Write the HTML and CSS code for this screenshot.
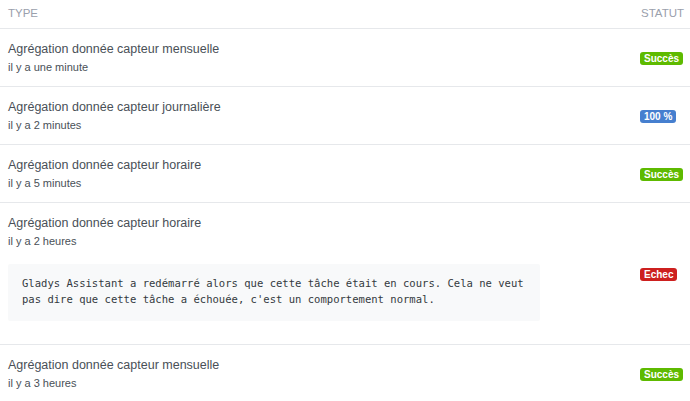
FILE: index.html
```html
<!DOCTYPE html>
<html lang="fr">
<head>
<meta charset="utf-8">
<link rel="stylesheet" href="styles.css">
</head>
<body>
<table class="jobs">
  <thead>
    <tr><th class="col-type">Type</th><th class="col-status">Statut</th></tr>
  </thead>
  <tbody>
    <tr>
      <td class="col-type"><div class="title">Agrégation donnée capteur mensuelle</div><div class="sub">il y a une minute</div></td>
      <td class="col-status"><span class="badge success">Succès</span></td>
    </tr>
    <tr>
      <td class="col-type"><div class="title">Agrégation donnée capteur journalière</div><div class="sub">il y a 2 minutes</div></td>
      <td class="col-status"><span class="badge progress">100 %</span></td>
    </tr>
    <tr>
      <td class="col-type"><div class="title">Agrégation donnée capteur horaire</div><div class="sub">il y a 5 minutes</div></td>
      <td class="col-status"><span class="badge success">Succès</span></td>
    </tr>
    <tr>
      <td class="col-type"><div class="title">Agrégation donnée capteur horaire</div><div class="sub">il y a 2 heures</div><pre class="error">Gladys Assistant a redémarré alors que cette tâche était en cours. Cela ne veut pas dire que cette tâche a échouée, c'est un comportement normal.</pre></td>
      <td class="col-status"><span class="badge failed">Echec</span></td>
    </tr>
    <tr>
      <td class="col-type"><div class="title">Agrégation donnée capteur mensuelle</div><div class="sub">il y a 3 heures</div></td>
      <td class="col-status"><span class="badge success">Succès</span></td>
    </tr>
  </tbody>
</table>
</body>
</html>
```
FILE: styles.css
```css
html, body {
  margin: 0;
  padding: 0;
  background: #ffffff;
}
body {
  font-family: "Liberation Sans", Arial, sans-serif;
  color: #495057;
}
.jobs {
  width: 690px;
  border-collapse: collapse;
  table-layout: fixed;
}
.jobs th {
  font-size: 11.5px;
  line-height: 16px;
  font-weight: normal;
  text-transform: uppercase;
  color: #9aa0ac;
  text-align: left;
  padding: 5px 8px 7px 8px;
  border-bottom: 1px solid #e6e8eb;
}
.jobs th.col-status {
  padding-left: 9px;
  padding-right: 0;
}
.jobs td {
  padding: 10px 8px 10px 8px;
  border-top: 1px solid #e6e8eb;
  vertical-align: middle;
}
.jobs td.col-status {
  padding-right: 0;
}
.jobs thead + tbody tr:first-child td {
  border-top: none;
}
.col-type {
  width: 616px;
}
.title {
  font-size: 12.5px;
  line-height: 20px;
  color: #495057;
}
.sub {
  font-size: 11px;
  line-height: 17px;
  color: #495057;
}
.error {
  box-sizing: border-box;
  width: 532px;
  margin: 14px 0 13px 0;
  padding: 11px 14px 14px 14px;
  background: #f8f9fa;
  font-family: "DejaVu Sans Mono", "Liberation Mono", monospace;
  font-size: 10.55px;
  line-height: 16px;
  color: #343a40;
  white-space: pre-wrap;
  border-radius: 2px;
}
.badge {
  display: inline-block;
  font-size: 10px;
  font-weight: bold;
  line-height: 13px;
  padding: 0 4px;
  border-radius: 3px;
  color: #ffffff;
  vertical-align: middle;
}
.badge.success { background: #5eba00; }
.badge.progress { background: #467fcf; }
.badge.failed { background: #cd201f; }
```
